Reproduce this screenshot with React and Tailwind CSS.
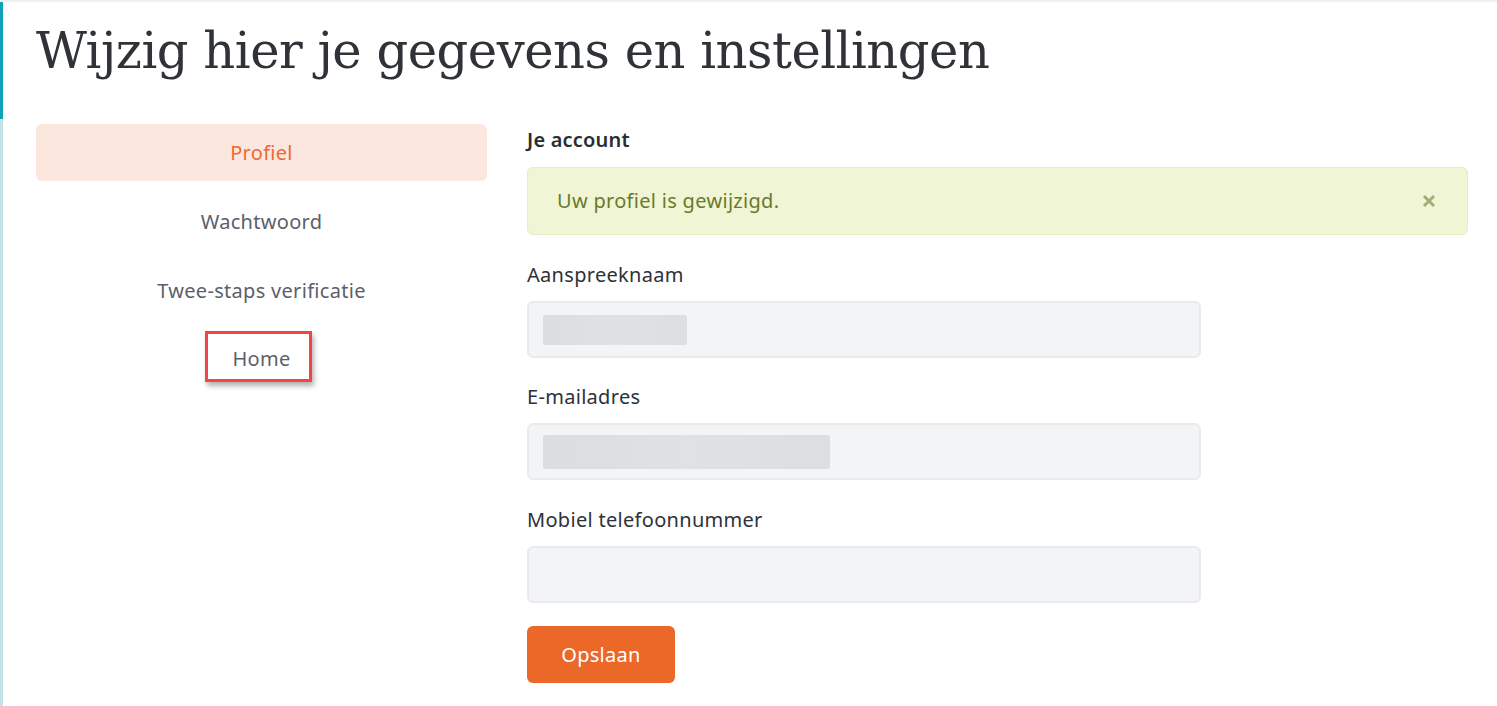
import React from 'react';

const navItems = ['Profiel', 'Wachtwoord', 'Twee-staps verificatie', 'Home'];

const Field = ({ label, blurWidth, blurHeight, first }) => (
  <div className={first ? 'mt-[26px]' : 'mt-[25px]'}>
    <label className="block text-[20px] tracking-[0.3px] leading-[28px] text-[#2e3138]">{label}</label>
    <div className="mt-[12px] w-[674px] h-[57px] bg-[#f3f4f6] border-2 border-[#e8eaed] rounded-md flex items-center pl-[14px]">
      {blurWidth ? (
        <div
          className="bg-gradient-to-r from-[#dcdde0] via-[#e0e1e4] to-[#dcdee1] rounded-[2px] blur-[0.6px]"
          style={{ width: blurWidth, height: blurHeight }}
        />
      ) : null}
    </div>
  </div>
);

const App = () => {
  return (
    <div className="min-h-screen bg-white border-t-2 border-[#f0f1f2] flex font-['Noto_Sans',sans-serif]">
      <div className="w-[3px] flex flex-col shrink-0">
        <div className="h-[117px] bg-[#10a3b3]" />
        <div className="flex-1 bg-[#c3e3e9]" />
      </div>

      <div className="flex-1 pl-[33px] pr-[29px]">
        <h1 className="pt-[18px] text-[49.6px] leading-[62px] text-[#2f3236] font-['DejaVu_Serif',serif] tracking-[-0.5px]">
          Wijzig hier je gegevens en instellingen
        </h1>

        <div className="flex gap-[40px] mt-[42px]">
          {/* left nav */}
          <nav className="w-[451px] shrink-0 flex flex-col gap-[12px] text-[20px] tracking-[0.3px]">
            {navItems.map((item) =>
              item === 'Profiel' ? (
                <div
                  key={item}
                  className="h-[57px] rounded-md bg-[#fce7df] text-[#ec6a33] flex items-center justify-center"
                >
                  {item}
                </div>
              ) : item === 'Home' ? (
                <div key={item} className="h-[57px] flex justify-center">
                  <span className="w-[107px] h-[51px] ml-[-6px] border-[3px] border-[#f04545] shadow-[2px_4px_5px_rgba(0,0,0,0.3)] flex items-center justify-center pl-[6px] pt-[4px] text-[#5b5f6b]">
                    {item}
                  </span>
                </div>
              ) : (
                <div
                  key={item}
                  className="h-[57px] text-[#5b5f6b] flex items-center justify-center"
                >
                  {item}
                </div>
              )
            )}
          </nav>

          {/* right form */}
          <div className="flex-1">
            <h2 className="pt-[2px] text-[20px] tracking-[0.2px] leading-[28px] font-semibold text-[#2a2d33]">Je account</h2>

            <div className="mt-[13px] h-[68px] rounded-md bg-[#f0f5d6] border border-[#e4edc3] flex items-center justify-between pl-[29px] pr-[30px]">
              <span className="text-[20px] tracking-[0.3px] text-[#6a7a2c]">Uw profiel is gewijzigd.</span>
              <svg width="14" height="14" viewBox="0 0 14 14" className="mr-[1px]">
                <path d="M2 2L12 12M12 2L2 12" stroke="#a3ad77" strokeWidth="3" strokeLinecap="butt" />
              </svg>
            </div>

            <Field label="Aanspreeknaam" blurWidth={144} blurHeight={30} first />
            <Field label="E-mailadres" blurWidth={287} blurHeight={34} />
            <Field label="Mobiel telefoonnummer" first />

            <button className="mt-[23px] w-[148px] h-[57px] rounded-md bg-[#eb6828] text-white text-[20px] tracking-[0.3px]">
              Opslaan
            </button>
          </div>
        </div>
      </div>
    </div>
  );
};

export default App;
